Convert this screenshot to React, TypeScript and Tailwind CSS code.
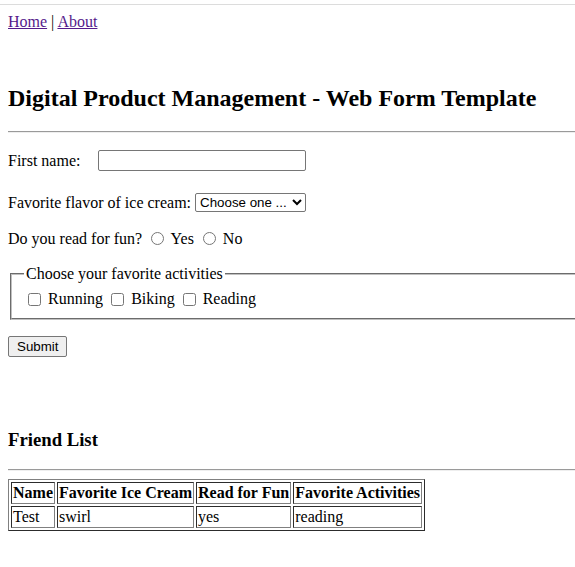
import React from "react";

export default function App() {
  return (
    <div className="min-h-[567px] w-full overflow-hidden bg-white font-['Liberation_Serif',serif] text-[16px] text-black">
      <div className="h-[4px]" />
      <div className="h-px w-full bg-[#dcdcdc]" />
      <div className="w-[640px] px-2">
        <nav className="mt-[8px] leading-[18px]">
          <a href="#" className="text-[#551a8b] underline">Home</a> |{" "}
          <a href="#" className="text-[#551a8b] underline">About</a>
        </nav>

        <h1 className="mt-[53px] text-[24px] font-bold leading-[28px]">
          Digital Product Management - Web Form Template
        </h1>

        <div className="mt-[19px] h-0 border-t border-b border-t-[#9a9a9a] border-b-[#eeeeee]" />

        <form className="block">
          <div className="mt-[17px] flex h-[21px] items-center leading-[18px]">
            <label className="w-[90px]">First name:</label>
            <input
              type="text"
              className="h-[21px] w-[208px] rounded-[2px] border border-[#767676] bg-white px-[2px] py-px font-['Liberation_Sans',sans-serif] text-[13.33px]"
            />
          </div>

          <div className="mt-[22px] flex h-[19px] items-center gap-[4px] leading-[18px]">
            <label>Favorite flavor of ice cream:</label>
            <select className="h-[19px] w-[111px] rounded-[2px] border border-[#767676] bg-white font-['Liberation_Sans',sans-serif] text-[13.33px] text-black">
              <option>Choose one ...</option>
              <option>Vanilla</option>
              <option>Chocolate</option>
              <option>Swirl</option>
            </select>
          </div>

          <div className="mt-[17px] leading-[18px]">
            Do you read for fun?{" "}
            <input type="radio" name="fun" className="m-[3px_3px_0_5px] align-[-1px]" /> Yes{" "}
            <input type="radio" name="fun" className="m-[3px_3px_0_5px] align-[-1px]" /> No
          </div>

          <fieldset className="mx-[2px] mt-[17px] border-2 border-[#c0c0c0] px-[12px] pb-[9px] pt-[6px] [--tw-border-style:groove]">
            <legend className="px-[2px] leading-[18px]">Choose your favorite activities</legend>
            <div className="h-[20px] leading-[20px]">
              <input type="checkbox" className="m-[3px_3px_3px_4px] align-[-2px]" /> Running{" "}
              <input type="checkbox" className="m-[3px_3px_3px_4px] align-[-2px]" /> Biking{" "}
              <input type="checkbox" className="m-[3px_3px_3px_4px] align-[-2px]" /> Reading
            </div>
          </fieldset>

          <button
            type="button"
            className="mt-[16px] block h-[21px] rounded-[2px] border border-[#767676] bg-[#efefef] px-[8px] font-['Liberation_Sans',sans-serif] text-[13.33px] leading-[17px] text-black"
          >
            Submit
          </button>
        </form>

        <h3 className="mt-[72px] text-[18.72px] font-bold leading-[22px]">Friend List</h3>

        <div className="mt-[18px] h-0 border-t border-b border-t-[#9a9a9a] border-b-[#eeeeee]" />

        <table className="mt-[8px] border-separate border-spacing-[2px] border border-[#808080] [--tw-border-style:outset] leading-[18px]">
          <thead>
            <tr>
              <th className="border border-[#808080] p-px font-bold [--tw-border-style:inset]">Name</th>
              <th className="border border-[#808080] p-px font-bold [--tw-border-style:inset]">Favorite Ice Cream</th>
              <th className="border border-[#808080] p-px font-bold [--tw-border-style:inset]">Read for Fun</th>
              <th className="border border-[#808080] p-px font-bold [--tw-border-style:inset]">Favorite Activities</th>
            </tr>
          </thead>
          <tbody>
            <tr>
              <td className="border border-[#808080] p-px text-left [--tw-border-style:inset]">Test</td>
              <td className="border border-[#808080] p-px text-left [--tw-border-style:inset]">swirl</td>
              <td className="border border-[#808080] p-px text-left [--tw-border-style:inset]">yes</td>
              <td className="border border-[#808080] p-px text-left [--tw-border-style:inset]">reading</td>
            </tr>
          </tbody>
        </table>
      </div>
    </div>
  );
}
